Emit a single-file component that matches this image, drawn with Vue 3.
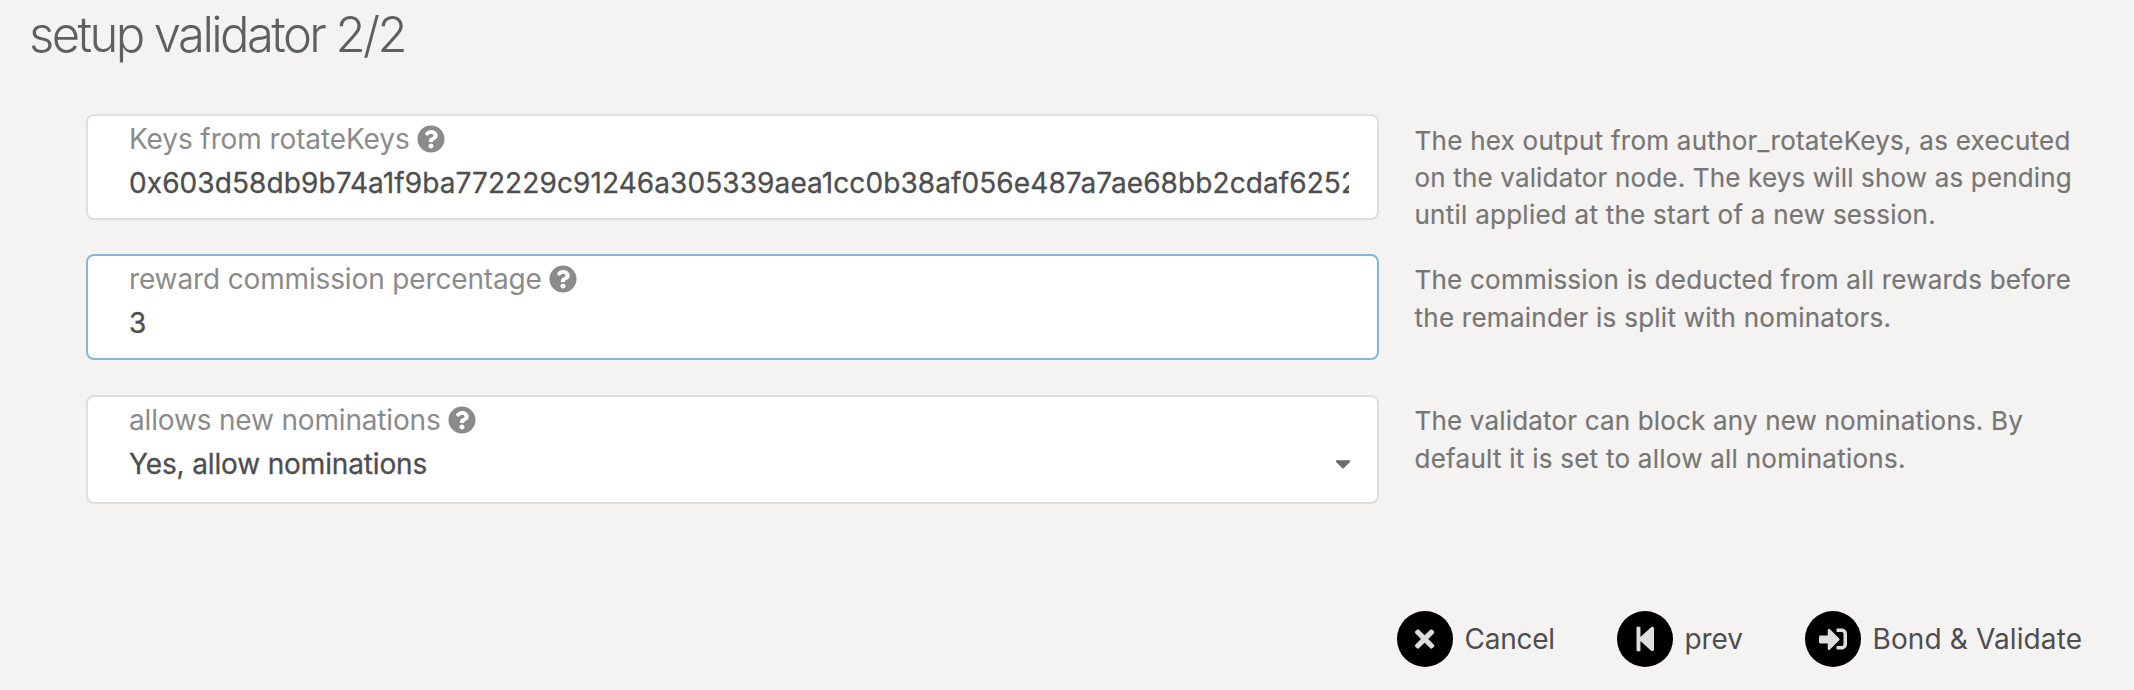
<script setup>
const helpIcon = 'M504 256c0 136.997-111.043 248-248 248S8 392.997 8 256C8 119.083 119.043 8 256 8s248 111.083 248 248zM262.655 90c-54.497 0-89.255 22.957-116.549 63.758-3.536 5.286-2.353 12.415 2.715 16.258l34.699 26.31c5.205 3.947 12.621 3.008 16.665-2.122 17.864-22.658 30.113-35.797 57.303-35.797 20.429 0 45.698 13.148 45.698 32.958 0 14.976-12.363 22.667-32.534 33.976C247.128 238.528 216 254.941 216 296v4c0 6.627 5.373 12 12 12h56c6.627 0 12-5.373 12-12v-1.333c0-28.462 83.186-29.647 83.186-106.667 0-58.002-60.165-102-116.531-102zM256 338c-25.365 0-46 20.635-46 46 0 25.364 20.635 46 46 46s46-20.636 46-46c0-25.365-20.635-46-46-46z'
const actions = [
  { id: 'cancel', label: 'Cancel', box: '0 0 352 512', path: 'M242.72 256l100.07-100.07c12.28-12.28 12.28-32.19 0-44.48l-22.24-22.24c-12.28-12.28-32.19-12.28-44.48 0L176 189.28 75.93 89.21c-12.28-12.28-32.19-12.28-44.48 0L9.21 111.45c-12.28 12.28-12.28 32.19 0 44.48L109.28 256 9.21 356.07c-12.28 12.28-12.28 32.19 0 44.48l22.24 22.24c12.28 12.28 32.2 12.28 44.48 0L176 322.72l100.07 100.07c12.28 12.28 32.2 12.28 44.48 0l22.24-22.24c12.28-12.28 12.28-32.19 0-44.48L242.72 256z' },
  { id: 'prev', label: 'prev', box: '0 0 448 512', path: 'M64 468V44c0-6.6 5.4-12 12-12h48c6.6 0 12 5.4 12 12v176.4l195.5-181C352.1 22.3 384 36.6 384 64v384c0 27.4-31.9 41.7-52.5 24.6L136 292.7V468c0 6.6-5.4 12-12 12H76c-6.6 0-12-5.4-12-12z' },
  { id: 'bond', label: 'Bond & Validate', box: '0 0 512 512', path: 'M416 448h-84c-6.6 0-12-5.4-12-12v-40c0-6.6 5.4-12 12-12h84c17.7 0 32-14.3 32-32V160c0-17.7-14.3-32-32-32h-84c-6.6 0-12-5.4-12-12V76c0-6.6 5.4-12 12-12h84c53 0 96 43 96 96v192c0 53-43 96-96 96zm-47-201L201 79c-15-15-41-4.5-41 17v96H24c-13.3 0-24 10.7-24 24v96c0 13.3 10.7 24 24 24h136v96c0 21.5 26 32 41 17l168-168c9.3-9.4 9.3-24.6 0-34z' },
]
const fields = [
  { id: 'keys', label: 'Keys from rotateKeys', value: '0x603d58db9b74a1f9ba772229c91246a305339aea1cc0b38af056e487a7ae68bb2cdaf6252', help: ['The hex output from author_rotateKeys, as executed', 'on the validator node. The keys will show as pending', 'until applied at the start of a new session.'] },
  { id: 'commission', label: 'reward commission percentage', value: '3', help: ['The commission is deducted from all rewards before', 'the remainder is split with nominators.'] },
  { id: 'nominations', label: 'allows new nominations', value: 'Yes, allow nominations', help: ['The validator can block any new nominations. By', 'default it is set to allow all nominations.'] },
]
</script>

<template>
  <main class="page">
    <h1>setup validator 2/2</h1>
    <section v-for="f in fields" :key="f.id" class="row" :class="f.id">
      <div class="field">
        <label>
          <span>{{ f.label }}</span>
          <svg viewBox="0 0 512 512"><path :d="helpIcon" /></svg>
        </label>
        <div class="value">{{ f.value }}</div>
        <svg v-if="f.id === 'nominations'" class="caret" viewBox="17 192 286 170"><path d="M31.3 192h257.3c17.8 0 26.7 21.5 14.1 34.1L174.1 354.8c-7.8 7.8-20.5 7.8-28.3 0L17.2 226.1C4.6 213.5 13.4 192 31.3 192z" /></svg>
      </div>
      <p><template v-for="h in f.help" :key="h"><span>{{ h }}</span><br /></template></p>
    </section>
    <footer>
      <button v-for="a in actions" :key="a.id" :class="a.id">
        <i><svg :viewBox="a.box"><path :d="a.path" /></svg></i>
        <span>{{ a.label }}</span>
      </button>
    </footer>
  </main>
</template>

<style>
body { background: #f4f3f1; }
</style>
<style scoped>
.page { font-family: Inter, "Liberation Sans", sans-serif; font-size: 28px; color: #4e4e4e; height: 690px; display: flex; flex-direction: column; overflow: hidden; }
h1 { margin: 0; padding: 5px 0 0 29px; height: 114px; box-sizing: border-box; flex: none; font-size: 49px; font-weight: 300; line-height: 60px; letter-spacing: -2.6px; color: #5f5f5e; }
.row { display: flex; height: 140px; padding-left: 86px; flex: none; }
.nominations { height: 141px; margin-top: 1px; }
.field { position: relative; width: 1293px; height: 106px; box-sizing: border-box; border: 2px solid #dededf; border-radius: 8px; background: #fff; padding: 5px 28px 0 41px; }
.commission .field { border-color: #85b7d9; }
.nominations .field { height: 109px; }
label { display: flex; gap: 7.3px; height: 36px; line-height: 36px; letter-spacing: -0.14px; color: #8b8b8b; }
.keys label { letter-spacing: -0.1px; }
.nominations label { letter-spacing: -0.17px; }
label svg { width: 28px; height: 28px; margin-top: 4px; fill: #8b8b8b; }
.value { margin-top: 4px; line-height: 44px; white-space: nowrap; overflow: hidden; letter-spacing: -0.14px; -webkit-text-stroke: 0.3px #4e4e4e; }
.keys .value { letter-spacing: 0.09px; }
.caret { position: absolute; right: 27px; top: 63px; width: 14px; height: 9px; fill: #6b6b6b; }
p { margin: 8px 0 0 35.5px; font-size: 26px; line-height: 37.2px; letter-spacing: 0.25px; color: #777674; white-space: nowrap; -webkit-text-stroke: 0.2px #777674; }
.keys p span:nth-of-type(2) { letter-spacing: 0.16px; }
.commission p span:first-child { letter-spacing: 0.22px; }
.nominations p span:first-child { letter-spacing: 0.17px; }
.commission p, .nominations p { margin-top: 6.5px; line-height: 38px; }
footer { display: grid; grid-template-columns: 220px 188px auto; margin-top: 75px; padding-left: 1397px; height: 56px; }
button { border: 0; padding: 0; background: none; font: inherit; color: inherit; display: flex; align-items: center; gap: 11.5px; }
.cancel { letter-spacing: -0.25px; }
.prev { letter-spacing: -0.1px; }
.bond { letter-spacing: 0.12px; }
i { width: 56px; height: 56px; border-radius: 50%; background: #000; display: grid; place-items: center; }
i svg { height: 28px; fill: #dedede; }
</style>
